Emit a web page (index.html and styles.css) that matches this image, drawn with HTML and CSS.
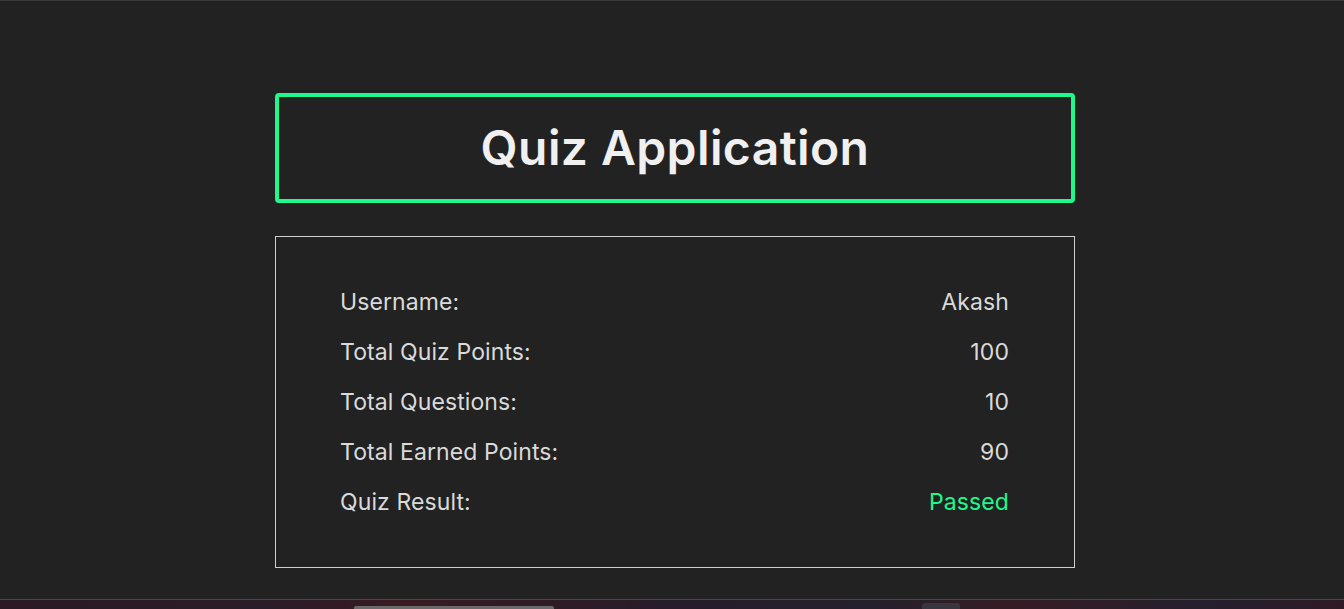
FILE: index.html
```html
<!DOCTYPE html>
<html lang="en">
<head>
<meta charset="utf-8">
<title>Quiz Application</title>
<link rel="stylesheet" href="styles.css">
</head>
<body>
<div class="page">
  <main class="main">
    <div class="container">
      <header class="title-box">
        <h1 class="title">Quiz Application</h1>
      </header>
      <section class="result-card">
        <div class="row"><span class="label">Username:</span><span class="value">Akash</span></div>
        <div class="row"><span class="label">Total Quiz Points:</span><span class="value">100</span></div>
        <div class="row"><span class="label">Total Questions:</span><span class="value">10</span></div>
        <div class="row"><span class="label">Total Earned Points:</span><span class="value">90</span></div>
        <div class="row"><span class="label">Quiz Result:</span><span class="value value-pass">Passed</span></div>
      </section>
    </div>
  </main>
  <div class="desk">
    <span class="desk-pill"></span>
    <span class="desk-tab"></span>
  </div>
</div>
</body>
</html>
```
FILE: styles.css
```css
html, body {
  margin: 0;
  padding: 0;
  background: #222222;
}
body {
  font-family: "Inter", "Open Sans", sans-serif;
  color: #dcdcdc;
}
.page {
  height: 609px;
  display: flex;
  flex-direction: column;
  border-top: 1px solid #3a3a3a;
  box-sizing: border-box;
}
.main {
  flex: 1;
  padding-left: 6px;
  padding-top: 92px;
}
.container {
  width: 800px;
  margin: 0 auto;
  display: flex;
  flex-direction: column;
  gap: 33px;
}
.title-box {
  box-sizing: border-box;
  height: 110px;
  border: 4px solid #1ef88d;
  border-radius: 4px;
  display: flex;
  align-items: center;
  justify-content: center;
}
.title {
  margin: 0;
  font-size: 48px;
  font-weight: 600;
  letter-spacing: 0.4px;
  color: #f0f0f0;
  line-height: 1;
}
.result-card {
  box-sizing: border-box;
  height: 332px;
  border: 1px solid #cfcfcf;
  padding: 47px 65px 0 64px;
  display: flex;
  flex-direction: column;
  gap: 14px;
}
.row {
  display: flex;
  justify-content: space-between;
  align-items: center;
  height: 36px;
  font-size: 23px;
  letter-spacing: 0.1px;
  color: #dadada;
}
.value-pass {
  color: #1ef88d;
}
.desk {
  height: 9px;
  border-top: 1px solid #4a4a4a;
  background: linear-gradient(90deg, #2b1a26 0%, #2a1c28 20%, #3a1a22 30%, #261c2a 50%, #24202c 65%, #351c24 75%, #251f2e 90%, #2e1a25 100%);
  position: relative;
}
.desk-pill {
  position: absolute;
  left: 354px;
  top: 6px;
  width: 200px;
  height: 3px;
  background: #6a6a6a;
  border-radius: 2px 2px 0 0;
}
.desk-tab {
  position: absolute;
  left: 922px;
  top: 3px;
  width: 38px;
  height: 6px;
  background: #3a3640;
  border-radius: 3px 3px 0 0;
}
```
